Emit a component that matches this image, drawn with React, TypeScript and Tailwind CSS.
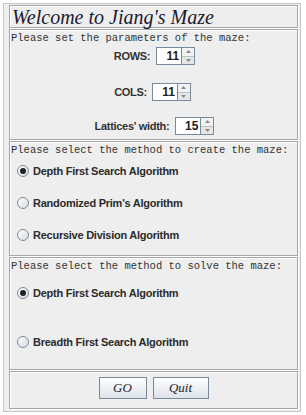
import React, { useState } from 'react';

const mono = { fontFamily: '"Liberation Mono", "DejaVu Sans Mono", monospace' };
const sans = { fontFamily: '"Liberation Sans", Arial, sans-serif' };
const serif = { fontFamily: '"Liberation Serif", "Times New Roman", serif' };

function Spinner({ value }: { value: number }) {
  return (
    <div className="flex h-[18px]">
      <div
        className="w-[26px] h-full bg-white border border-[#7a8a99] flex items-center justify-end pr-[2px] text-[12px] font-bold text-[#222]"
        style={sans}
      >
        {value}
      </div>
      <div className="w-[13px] h-full flex flex-col border border-l-0 border-[#7a8a99]">
        <div className="flex-1 bg-[#f2f2f2] border-b border-[#b8c0c8] flex items-center justify-center">
          <svg width="5" height="3" viewBox="0 0 5 3"><path d="M0 3 L2.5 0 L5 3Z" fill="#8a8a8a" /></svg>
        </div>
        <div className="flex-1 bg-[#e6e6e6] flex items-center justify-center">
          <svg width="5" height="3" viewBox="0 0 5 3"><path d="M0 0 L2.5 3 L5 0Z" fill="#8a8a8a" /></svg>
        </div>
      </div>
    </div>
  );
}

function Radio({ checked, label, onClick }: { checked: boolean; label: string; onClick: () => void }) {
  return (
    <div className="flex items-center gap-[4px] h-[14px] cursor-pointer" onClick={onClick}>
      <div className="w-[12px] h-[12px] rounded-full border border-[#7b8a99] bg-gradient-to-br from-white to-[#d4dbe2] flex items-center justify-center">
        {checked && <div className="w-[6px] h-[6px] rounded-full bg-[#222]" />}
      </div>
      <span className="text-[11px] leading-[14px] font-bold tracking-[-0.25px] text-[#2b2b2b]" style={sans}>
        {label}
      </span>
    </div>
  );
}

const panel = 'border border-[#a6a6a6] shadow-[inset_1px_1px_0_#ffffff,1px_1px_0_#ffffff]';
const label = 'text-[11px] font-bold tracking-[-0.3px] text-[#333]';

export default function App() {
  const [create, setCreate] = useState(0);
  const [solve, setSolve] = useState(0);

  return (
    <div className="w-[306px] h-[415px] bg-white pt-[3px] pl-[3px]">
      <div className="w-[298px] h-[409px] border border-[#c6c6c6] bg-[#eeeeee] pl-[5px] pr-[2px] pt-[1px] flex flex-col gap-[1px]">
        <div className={`${panel} h-[23px] flex items-center pl-[2px]`}>
          <span className="italic text-[20px] text-[#1a1a2e] leading-none" style={serif}>
            Welcome to Jiang's Maze
          </span>
        </div>

        <div className={`${panel} h-[111px] pt-[2px] flex flex-col`}>
          <p className="text-[10.5px] leading-[12px] text-[#333] pl-[1px]" style={mono}>
            Please set the parameters of the maze:
          </p>
          <div className="flex justify-center items-center gap-[6px] mt-[3px] pl-[2px]">
            <span className={label} style={sans}>ROWS:</span>
            <Spinner value={11} />
          </div>
          <div className="flex justify-center items-center gap-[5px] mt-[18px] pr-[2px]">
            <span className={label} style={sans}>COLS:</span>
            <Spinner value={11} />
          </div>
          <div className="flex justify-center items-center gap-[6px] mt-[16px] pl-[2px]">
            <span className={label} style={sans}>Lattices' width:</span>
            <Spinner value={15} />
          </div>
        </div>

        <div className={`${panel} h-[115px] pt-[2px] flex flex-col`}>
          <p className="text-[10.5px] leading-[12px] text-[#333] pl-[1px]" style={mono}>
            Please select the method to create the maze:
          </p>
          <div className="pl-[7px] flex flex-col gap-[18px] mt-[8px]">
            <Radio checked={create === 0} label="Depth First Search Algorithm" onClick={() => setCreate(0)} />
            <Radio checked={create === 1} label="Randomized Prim's Algorithm" onClick={() => setCreate(1)} />
            <Radio checked={create === 2} label="Recursive Division Algorithm" onClick={() => setCreate(2)} />
          </div>
        </div>

        <div className={`${panel} h-[113px] pt-[2px] flex flex-col`}>
          <p className="text-[10.5px] leading-[12px] text-[#333] pl-[1px]" style={mono}>
            Please select the method to solve the maze:
          </p>
          <div className="pl-[7px] flex flex-col gap-[35px] mt-[14px]">
            <Radio checked={solve === 0} label="Depth First Search Algorithm" onClick={() => setSolve(0)} />
            <Radio checked={solve === 1} label="Breadth First Search Algorithm" onClick={() => setSolve(1)} />
          </div>
        </div>

        <div className={`${panel} h-[38px] flex justify-center items-start pt-[5px] gap-[6px]`}>
          <button
            className="w-[48px] h-[22px] border border-[#7a8a99] bg-gradient-to-b from-white to-[#dde3ea] italic text-[13px] text-[#222]"
            style={serif}
          >
            GO
          </button>
          <button
            className="w-[56px] h-[22px] border border-[#7a8a99] bg-gradient-to-b from-white to-[#dde3ea] italic text-[13px] text-[#222]"
            style={serif}
          >
            Quit
          </button>
        </div>
      </div>
    </div>
  );
}
